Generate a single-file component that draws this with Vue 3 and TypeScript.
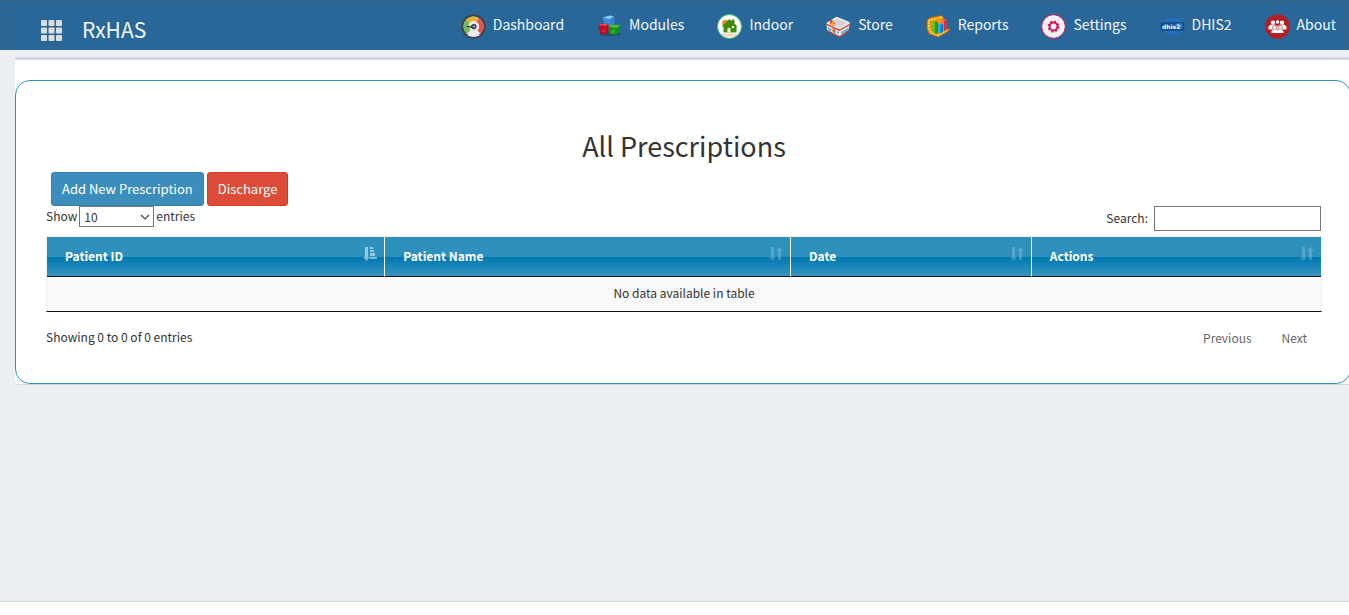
<script setup lang="ts">
import { computed, ref } from 'vue'

interface Column {
  key: string
  label: string
  width: string
}

const navItems: string[] = ['Dashboard', 'Modules', 'Indoor', 'Store', 'Reports', 'Settings', 'DHIS2', 'About']

const columns: Column[] = [
  { key: 'id', label: 'Patient ID', width: '26.55%' },
  { key: 'name', label: 'Patient Name', width: '31.85%' },
  { key: 'date', label: 'Date', width: '18.9%' },
  { key: 'actions', label: 'Actions', width: '22.7%' },
]

const pageLength = ref<number>(10)
const search = ref<string>('')
const sorted = ref<string>('id')
const total = computed<number>(() => 0)
</script>

<template>
  <div class="page">
    <header class="topbar">
      <div class="brand">
        <button class="grid-button" type="button" aria-label="Menu">
          <svg width="21" height="21" viewBox="0 0 21 21" fill="#dcdddf">
            <template v-for="r in 3" :key="r">
              <rect v-for="c in 3" :key="c" :x="(c - 1) * 7.5" :y="(r - 1) * 7.5" width="6" height="6" rx="1" />
            </template>
          </svg>
        </button>
        <a class="brand-name" href="#">RxHAS</a>
      </div>
      <nav class="nav">
        <a v-for="item in navItems" :key="item" class="nav-item" href="#">
          <svg v-if="item === 'Dashboard'" class="icon" viewBox="0 0 25 25">
            <circle cx="12.5" cy="12.5" r="12.2" fill="#3d4552" />
            <circle cx="12.5" cy="12.5" r="10" fill="#ececec" />
            <path d="M12.5 12.5L6 20A10 10 0 0 1 5.400 5.400Z" fill="#76b956" />
            <path d="M12.500 12.500L5.400 5.400A10 10 0 0 1 18 4.200Z" fill="#e3b62f" />
            <path d="M12.500 12.500L18 4.200A10 10 0 0 1 19.500 19.600Z" fill="#ef4f4b" />
            <path d="M7.500 11a5.500 5.500 0 1 1 8.500 6l2.500 4.500q-6 2.500-12 0l3-5z" fill="#ececec" />
            <path d="M5.500 12h4l2-1.700a2.700 2.700 0 1 1 0 4.600l-2-1.500-4-.3z" fill="#3d4552" />
            <circle cx="13" cy="12.500" r="1" fill="#b9c2cc" />
          </svg>
          <svg v-else-if="item === 'Modules'" class="icon" viewBox="0 0 25 25">
            <ellipse cx="13" cy="20" rx="11" ry="2" fill="#1d4f78" />
            <path d="M6 3.500l7-2 4 1 .8 6.500-4.500 3H7.500z" fill="#3c91df" />
            <path d="M6 3.500l7-2 4 1-4 2.500z" fill="#91cafa" /><path d="M13 5l4-2.500.8 6.500-4.500 3z" fill="#3383cf" />
            <path d="M1.500 11.500l2-1.800h8v8l-2 2.300H3z" fill="#b80d20" />
            <path d="M1.500 11.500l2-1.800h8l-2 2.300z" fill="#df4650" /><path d="M3.500 18l5-5v5z" fill="#e01d32" />
            <path d="M11.500 13l3-2.500 9 .5-1 7-3 2.500h-7z" fill="#168b1e" />
            <path d="M11.500 13l3-2.500 9 .5-3.500 3z" fill="#4cb83d" /><path d="M13 18.500l5-4v5z" fill="#2fb52c" />
          </svg>
          <svg v-else-if="item === 'Indoor'" class="icon" viewBox="0 0 25 25">
            <circle cx="12.500" cy="12.500" r="12" fill="#fff" stroke="#39bd79" />
            <circle cx="8.500" cy="9" r="3.300" fill="#f58c32" />
            <path d="M4.500 12.500L12.500 5l2.500 2v-1.500h2.500V9.500l3 3h-1V18.500H6.500v-6z" fill="#438a05" />
            <path d="M10.500 14h3v4.500h-3zM15 12h2v2h-2z" fill="#fff" />
            <path d="M5.500 20.500h14M7 22h11" fill="none" stroke="#f5aa62" stroke-dasharray="2 1" />
          </svg>
          <svg v-else-if="item === 'Store'" class="icon" viewBox="0 0 25 25">
            <path d="M.5 9L10 3l14 5.500-1.500 7L13.500 23 1 16z" fill="#e8eef2" />
            <path d="M2 8.500L11 3l12 5-9 6z" fill="#d4d3d3" /><path d="M2 8.500L11 3l12 5-1.500.8L11 4.500 3.500 9z" fill="#f2f1ef" />
            <path d="M.5 9.500l13 6 10.800-6v1.500L13.500 17 .5 11z" fill="#e5372c" />
            <path d="M.7 16l12.800 6 10-6v1.300L13.500 23.300.7 17z" fill="#d33b2d" />
            <path d="M2 13l3.500 2v2.500L2 16zm13 5l7-4v2.500l-7 4zm-4-1l2 1v2l-2-1z" fill="#65afd1" />
            <path d="M4 6l3 .5 2 3-1 2.500-4-2z" fill="#f22626" /><path d="M4.500 9.500l4 1.500M6 7.500l1.500 2" stroke="#ffbb2f" stroke-width="1.500" />
            <path d="M6.500 14l3 1.500v4l-3-1.500z" fill="#cf6e33" />
          </svg>
          <svg v-else-if="item === 'Reports'" class="icon" viewBox="0 0 25 25">
            <path d="M1 7l3-3.500L16 1.500l1.500 2 2 10.500 4.500 1.500-3.500 3L12 23 3 20 1 15z" fill="#ef9810" stroke="#b85a08" stroke-width=".7" />
            <path d="M2 6.500l14-3.500M3 8l-.5 6 3 5 7 2.500 8-5" fill="none" stroke="#ffe164" stroke-width="1.300" stroke-dasharray="2 1" />
            <path d="M6 8l3-1.500 3 1v11.500l-3 1-3-2z" fill="#74bd15" /><path d="M9 7.500l3 .5V19l-3 1z" fill="#3b8f18" />
            <path d="M12 10l2-1 3 1v8l-3 1.500-2-1z" fill="#1fb6f2" /><path d="M14.500 10.500h2.500V18l-2.500 1z" fill="#087bcf" />
            <path d="M15 6l2-1 3.500 1v10l-2.500 1-1-1v-6l-2-1z" fill="#ff665e" /><path d="M18 7l2.500-1v10L18 17z" fill="#d92f36" />
          </svg>
          <svg v-else-if="item === 'Settings'" class="icon" viewBox="0 0 25 25">
            <circle cx="12.500" cy="12.500" r="11.800" fill="#f2f2f2" stroke="#d11b5a" />
            <circle cx="12.500" cy="12.500" r="3.900" fill="none" stroke="#d81557" stroke-width="2" />
            <circle cx="12.500" cy="12.500" r="5.300" fill="none" stroke="#d81557" stroke-width="1.300" stroke-dasharray="2.080 2.080" />
          </svg>
          <svg v-else-if="item === 'DHIS2'" class="icon" viewBox="0 0 25 25">
            <ellipse cx="12.500" cy="12.500" rx="11.500" ry="8.500" fill="#2370c2" />
            <rect x=".5" y="8" width="24" height="9" rx="3" fill="#174f8c" />
            <ellipse cx="19" cy="12" rx="3.500" ry="3" fill="#2380cd" />
            <text x="2" y="14.500" font-size="6" font-weight="700" fill="#fff" font-family="DejaVu Sans, sans-serif">dhis2</text>
          </svg>
          <svg v-else class="icon" viewBox="0 0 25 25">
            <circle cx="12.500" cy="12.500" r="12.300" fill="#b51e23" />
            <g fill="#fff">
              <circle cx="8" cy="8.500" r="2.100" /><circle cx="17" cy="8.500" r="2.100" /><circle cx="12.500" cy="8" r="1.700" />
              <path d="M3.500 15.500v-3l2.500-2h4l2.500 2 2.500-2h4l2.500 2v3z" />
              <circle cx="9.500" cy="13.500" r="2" stroke="#b51e23" stroke-width=".6" /><circle cx="15.500" cy="13.500" r="2" stroke="#b51e23" stroke-width=".6" />
              <path d="M6.500 19v-2l2-1.500h2.500l1.500 1 1.500-1h2.500l2 1.500v2z" />
            </g>
          </svg>
          <span>{{ item }}</span>
        </a>
      </nav>
    </header>

    <main class="content">
      <section class="box">
        <div class="panel">
          <h1 class="title">All Prescriptions</h1>
          <div class="actions">
            <button class="btn primary" type="button">Add New Prescription</button>
            <button class="btn danger" type="button">Discharge</button>
          </div>
          <div class="controls">
            <div class="length">
              <label for="page-length">Show</label>
              <span class="select-wrap">
                <select id="page-length" v-model="pageLength">
                  <option v-for="n in [10, 25, 50, 100]" :key="n" :value="n">{{ n }}</option>
                </select>
                <svg class="chevron" width="10" height="6" viewBox="0 0 10 6"><path d="M1 1l4 4 4-4" fill="none" stroke="#444" stroke-width="1.200" /></svg>
              </span>
              <span>entries</span>
            </div>
            <div class="filter">
              <label for="search">Search:</label>
              <input id="search" v-model="search" type="search" />
            </div>
          </div>
          <table class="table">
            <colgroup>
              <col v-for="col in columns" :key="col.key" :style="{ width: col.width }" />
            </colgroup>
            <thead>
              <tr>
                <th v-for="col in columns" :key="col.key" scope="col" @click="sorted = col.key">
                  <div class="head">
                    <span>{{ col.label }}</span>
                    <svg v-if="sorted === col.key" class="sort active" width="14" height="14" viewBox="0 0 14 14">
                      <path d="M2 0h3v10h2l-3.500 4L0 10h2zM7 0h3v2H7zM7 3h4v2H7zM7 6h5v3H7zM7 10h7v2H7z" />
                    </svg>
                    <svg v-else class="sort" width="14" height="14" viewBox="0 0 14 14">
                      <path d="M2 0h3v10h2l-3.500 4L0 10h2zM9 13h3V4h2l-3.500-4L7 4h2z" />
                    </svg>
                  </div>
                </th>
              </tr>
            </thead>
            <tbody>
              <tr>
                <td :colspan="columns.length">No data available in table</td>
              </tr>
            </tbody>
          </table>
          <div class="table-foot">
            <div>Showing {{ total }} to {{ total }} of {{ total }} entries</div>
            <div class="pager">
              <a href="#">Previous</a>
              <a href="#">Next</a>
            </div>
          </div>
        </div>
      </section>
    </main>
    <footer class="footer"></footer>
  </div>
</template>

<style>
body {
  margin: 0;
}
</style>

<style scoped>
* {
  box-sizing: border-box;
}
.page {
  display: flex;
  flex-direction: column;
  min-height: 100vh;
  overflow: hidden;
  background: #ebeef3;
  color: #333;
  font-family: "Source Sans Pro", "Noto Sans CJK SC", sans-serif;
  font-size: 12px;
  line-height: 20px;
}
a {
  color: inherit;
  text-decoration: none;
}
.topbar {
  display: flex;
  justify-content: space-between;
  height: 50px;
  padding: 0 13px 0 41px;
  background: #286798;
  box-shadow: inset 0 0 6px #3a668a;
  color: #f4f7fa;
}
.brand {
  display: flex;
  align-items: center;
  gap: 20px;
  padding-top: 10px;
}
.grid-button {
  display: flex;
  padding: 0;
  border: 0;
  background: none;
}
.brand-name {
  padding-bottom: 2px;
  font-size: 21px;
  line-height: 30px;
}
.nav {
  display: flex;
  gap: 33px;
  height: 50px;
}
.nav-item {
  display: flex;
  align-items: center;
  gap: 7px;
  font-size: 14px;
}
.nav-item span {
  padding-bottom: 2px;
}
.icon {
  width: 25px;
  height: 25px;
  margin-top: 3px;
}
.content {
  flex: 1;
  padding-top: 7px;
}
.box {
  margin: 0 -2px 0 15px;
  padding-top: 20px;
  border-top: 3px solid #d2d6de;
  border-radius: 3px;
  background: #fff;
  box-shadow: 0 1px 1px #0000001a;
}
.panel {
  padding: 45px 28px 35px 30px;
  border: 1px solid #2e90bd;
  border-radius: 15px;
}
.title {
  margin: 0 0 6px;
  text-align: center;
  font-size: 27px;
  font-weight: 400;
  line-height: 40px;
}
.actions {
  display: flex;
  gap: 3px;
  padding-left: 5px;
}
.btn {
  height: 34px;
  padding: 0 10px;
  border: 1px solid #367fa9;
  border-radius: 3px;
  background: #3c8dbc;
  color: #fff;
  font: inherit;
  font-size: 13px;
}
.danger {
  border-color: #d73925;
  background: #dd4b39;
}
.controls {
  display: flex;
  justify-content: space-between;
  height: 30px;
}
.length {
  display: flex;
  gap: 2px;
  height: 21px;
  align-items: center;
}
.select-wrap {
  position: relative;
  display: flex;
}
label,
.length > span:last-child {
  padding-bottom: 2px;
}
select {
  width: 75px;
  height: 21px;
  padding: 0 4px;
  border: 1px solid #767676;
  border-radius: 0;
  appearance: none;
  background: #fff;
  color: #333;
  font: inherit;
}
.chevron {
  position: absolute;
  top: 8px;
  right: 4px;
  pointer-events: none;
}
.filter {
  display: flex;
  gap: 6px;
  height: 25px;
  align-items: center;
  padding-right: 1px;
}
.filter input {
  width: 167px;
  height: 25px;
  padding: 0 4px;
  border: 1px solid #767676;
  appearance: none;
  font: inherit;
}
.table {
  width: 100%;
  table-layout: fixed;
  border: 1px solid #f0f0f0;
  border-bottom: 1px solid #111;
  border-spacing: 0;
  border-collapse: separate;
}
th {
  height: 40px;
  padding: 0 7px 0 18px;
  border-right: 1px solid #f4f4f4;
  border-bottom: 1px solid #111;
  background: linear-gradient(#2e90bd 0%, #2e90bd 50%, #0078b0 52%, #3893c0 100%);
  color: #fff;
  text-align: left;
  font-weight: 700;
}
th:last-child {
  border-right: 0;
}
.head {
  display: flex;
  align-items: center;
  justify-content: space-between;
}
.head span {
  padding-bottom: 2px;
}
.sort {
  margin-bottom: 6px;
  fill: #fff;
  opacity: 0.2;
}
.active {
  opacity: 0.5;
}
td {
  height: 34px;
  padding: 0 0 2px;
  background: #f9f9f9;
  text-align: center;
}
.table-foot {
  display: flex;
  justify-content: space-between;
  padding-top: 15px;
}
.pager {
  display: flex;
  gap: 30px;
  padding: 1px 15px 0 0;
  color: #666;
}
.footer {
  height: 14px;
  border-top: 1px solid #d2d6de;
  background: #fff;
}
</style>
